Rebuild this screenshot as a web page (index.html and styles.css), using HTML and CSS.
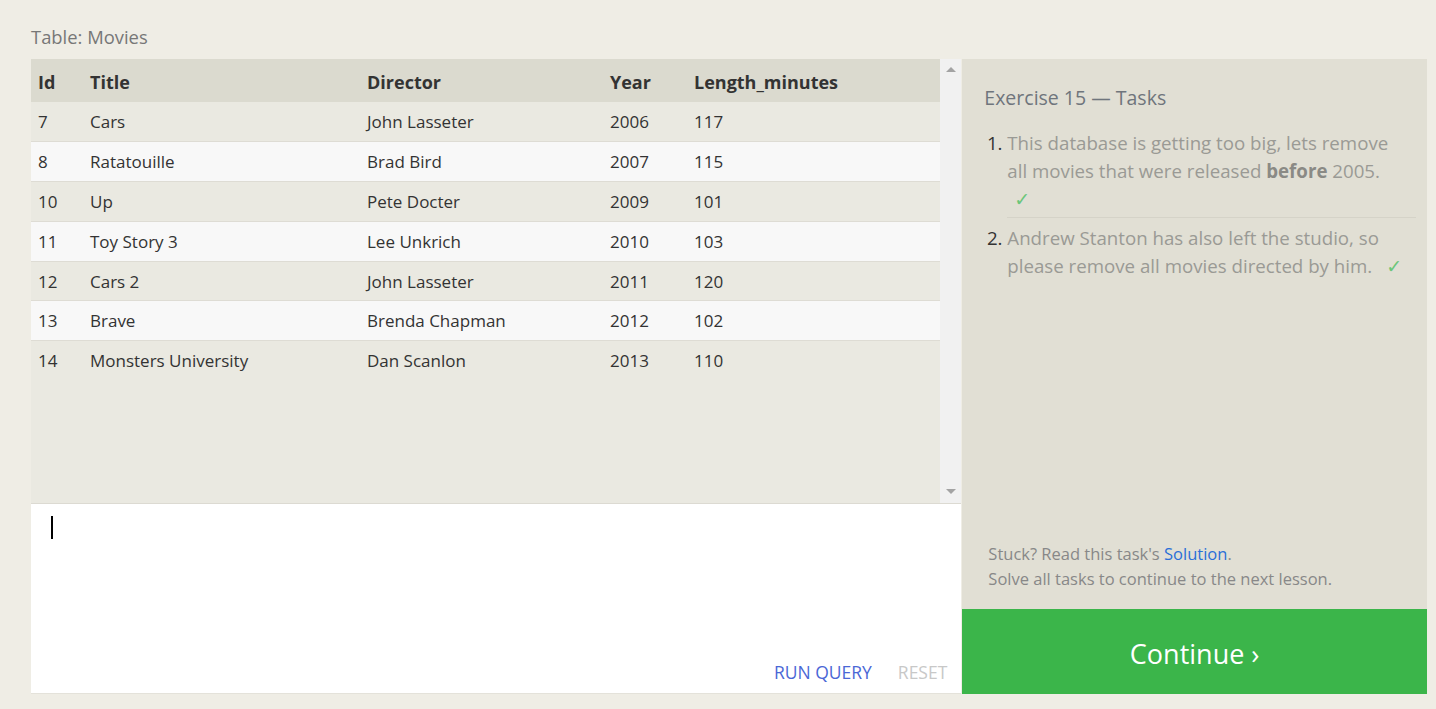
FILE: index.html
```html
<!DOCTYPE html>
<html>
<head>
<meta charset="utf-8">
<link rel="stylesheet" href="styles.css">
</head>
<body>
<div class="page">
  <div class="caption">Table: Movies</div>
  <div class="main">
    <div class="left">
      <div class="results">
        <div class="table-wrap">
          <table class="tbl">
            <colgroup>
              <col class="c-id"><col class="c-title"><col class="c-dir"><col class="c-year"><col class="c-len">
            </colgroup>
            <thead>
              <tr><th>Id</th><th>Title</th><th>Director</th><th>Year</th><th>Length_minutes</th></tr>
            </thead>
            <tbody>
              <tr><td>7</td><td>Cars</td><td>John Lasseter</td><td>2006</td><td>117</td></tr>
              <tr><td>8</td><td>Ratatouille</td><td>Brad Bird</td><td>2007</td><td>115</td></tr>
              <tr><td>10</td><td>Up</td><td>Pete Docter</td><td>2009</td><td>101</td></tr>
              <tr><td>11</td><td>Toy Story 3</td><td>Lee Unkrich</td><td>2010</td><td>103</td></tr>
              <tr><td>12</td><td>Cars 2</td><td>John Lasseter</td><td>2011</td><td>120</td></tr>
              <tr><td>13</td><td>Brave</td><td>Brenda Chapman</td><td>2012</td><td>102</td></tr>
              <tr class="last"><td>14</td><td>Monsters University</td><td>Dan Scanlon</td><td>2013</td><td>110</td></tr>
            </tbody>
          </table>
        </div>
        <div class="scrollbar">
          <span class="arrow up"></span>
          <span class="arrow down"></span>
        </div>
      </div>
      <div class="editor">
        <div class="input"><span class="cursor"></span></div>
        <div class="actions">
          <span class="run">RUN QUERY</span>
          <span class="reset">RESET</span>
        </div>
      </div>
    </div>
    <div class="right">
      <div class="tasks">
        <h2 class="heading">Exercise 15 — Tasks</h2>
        <ol class="list">
          <li class="item sep"><span class="txt">This database is getting too big, lets remove all movies that were released <b>before</b> 2005.<br><span class="check first">✓</span></span></li>
          <li class="item"><span class="txt">Andrew Stanton has also left the studio, so please remove all movies directed by him.<span class="check">✓</span></span></li>
        </ol>
        <div class="help">
          <div>Stuck? Read this task's <span class="link">Solution</span>.</div>
          <div>Solve all tasks to continue to the next lesson.</div>
        </div>
      </div>
      <div class="continue">Continue ›</div>
    </div>
  </div>
</div>
</body>
</html>
```

FILE: styles.css
```css
* { box-sizing: border-box; }
html, body { margin: 0; padding: 0; }
body {
  background: #efede5;
  font-family: "Open Sans", "Noto Sans", sans-serif;
  color: #333;
}
.page {
  padding: 24px 9px 15px 31px;
}
.caption {
  color: #777;
  font-size: 18.4px;
  line-height: 25px;
  margin-bottom: 10px;
}
.main {
  display: flex;
  height: 635px;
}
.left {
  width: 931px;
  display: flex;
  flex-direction: column;
  background: #fff;
  border-bottom: 1px solid #e4e2da;
}
.results {
  height: 445px;
  display: flex;
  background: #eae9e1;
  border-bottom: 1px solid #dcdad2;
}
.table-wrap {
  flex: 1;
}
.tbl {
  width: 100%;
  border-collapse: collapse;
  table-layout: fixed;
  font-size: 17px;
}
.c-id { width: 52px; }
.c-title { width: 277px; }
.c-dir { width: 243px; }
.c-year { width: 84px; }
.tbl th {
  background: #dbdacf;
  text-align: left;
  font-weight: 700;
  font-size: 18px;
  height: 43px;
  padding: 2px 7px 0;
  color: #333;
}
.tbl td {
  height: 39.8px;
  padding: 0 7px;
  border-bottom: 1px solid #dedcd4;
  color: #333;
  white-space: nowrap;
}
.tbl tbody tr:nth-child(odd) td { background: #eae9e1; }
.tbl tbody tr:nth-child(even) td { background: #f8f8f8; }
.tbl tr.last td { border-bottom: none; }
.scrollbar {
  width: 21px;
  background: #f1f1f1;
  display: flex;
  flex-direction: column;
  justify-content: space-between;
  align-items: center;
  padding: 8px 0 9px;
}
.arrow {
  width: 0;
  height: 0;
  border-left: 5px solid transparent;
  border-right: 5px solid transparent;
}
.arrow.up { border-bottom: 5px solid #a3a3a3; }
.arrow.down { border-top: 5px solid #a3a3a3; }
.editor {
  flex: 1;
  display: flex;
  flex-direction: column;
  background: #fff;
}
.input {
  flex: 1;
  padding: 12px 20px;
}
.cursor {
  display: block;
  width: 2px;
  height: 23px;
  background: #000;
}
.actions {
  display: flex;
  justify-content: flex-end;
  gap: 26px;
  padding: 0 14px 9px 0;
  font-size: 17.5px;
  line-height: 24px;
}
.run { color: #4a67d6; }
.reset { color: #c8c8c8; }
.right {
  width: 465px;
  margin-left: 1px;
  display: flex;
  flex-direction: column;
}
.tasks {
  flex: 1;
  background: #e1dfd4;
  padding: 26px 11px 18px 22px;
  display: flex;
  flex-direction: column;
}
.heading {
  margin: 0 0 18px 0;
  font-weight: 400;
  font-size: 19.5px;
  line-height: 26px;
  color: #6f757c;
}
.list {
  margin: 0;
  padding: 0 0 0 23px;
  flex: 1;
}
.item {
  font-size: 18.7px;
  line-height: 28px;
  color: #333;
  padding-right: 12px;
}
.item::marker { color: #333; }
.item.sep {
  padding-bottom: 4px;
  margin-bottom: 6px;
  border-bottom: 1px solid #d5d3c8;
}
.txt { color: #9a9a95; }
.txt b { color: #8a8a85; }
.check {
  font-family: "DejaVu Sans", sans-serif;
  font-size: 19px;
  color: #6bc67a;
  margin-left: 14px;
}
.check.first { margin-left: 7px; }
.help {
  font-size: 16.5px;
  line-height: 25px;
  color: #888;
  padding-left: 4px;
}
.link { color: #2a6fd8; }
.continue {
  height: 85px;
  background: #3bb54a;
  color: #fff;
  font-size: 27px;
  padding-top: 3px;
  display: flex;
  align-items: center;
  justify-content: center;
}
```
